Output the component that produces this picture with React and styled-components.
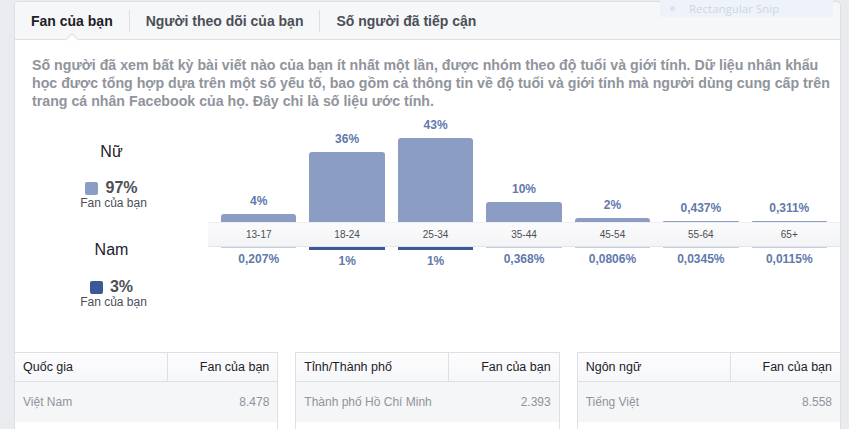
import React from "react";
import styled, { createGlobalStyle } from "styled-components";

const Global = createGlobalStyle`
  html, body { margin: 0; padding: 0; }
  body {
    background: #e9ebee;
    font-family: "Liberation Sans", Arial, sans-serif;
    width: 849px;
    height: 429px;
    overflow: hidden;
  }
`;

const Page = styled.div`
  position: relative;
  padding: 1px 8px 0 14px;
`;

const Panel = styled.div`
  background: #fff;
  border: 1px solid #dddfe2;
  border-bottom: none;
  border-radius: 5px 5px 0 0;
  height: 440px;
`;

const TabBar = styled.div`
  display: flex;
  align-items: center;
  height: 37px;
  background: #f6f7f9;
  border-bottom: 1px solid #dddfe2;
  border-radius: 5px 5px 0 0;
`;

const Tab = styled.div`
  position: relative;
  height: 100%;
  display: flex;
  align-items: center;
  padding: 0 16px;
  font-size: 14px;
  font-weight: bold;
  color: ${(p) => (p.$active ? "#1d2129" : "#4b4f56")};
  &::after {
    content: "";
    display: ${(p) => (p.$active ? "block" : "none")};
    position: absolute;
    left: 50%;
    bottom: -6px;
    width: 9px;
    height: 9px;
    margin-left: -5px;
    background: #fff;
    border-top: 1px solid #dddfe2;
    border-left: 1px solid #dddfe2;
    transform: rotate(45deg);
  }
`;

const TabSep = styled.div`
  width: 1px;
  height: 22px;
  background: #dddfe2;
`;

const Snip = styled.div`
  position: absolute;
  top: 0;
  left: 660px;
  width: 173px;
  height: 17px;
  background: #eef3fb;
  display: flex;
  align-items: center;
  gap: 14px;
  padding-left: 10px;
  box-sizing: border-box;
  font-family: "Open Sans", sans-serif;
  font-size: 11.5px;
  color: #cfd5df;
`;

const SnipDot = styled.span`
  width: 5px;
  height: 5px;
  border-radius: 50%;
  background: #dde3ee;
`;

const Description = styled.p`
  margin: 0;
  padding: 16px 6px 0 17px;
  font-size: 14.2px;
  font-weight: bold;
  line-height: 18px;
  color: #90949c;
`;

const ChartSection = styled.div`
  display: flex;
  margin-bottom: 44px;
`;

const GenderCol = styled.div`
  width: 193px;
  flex: none;
  display: flex;
  flex-direction: column;
  align-items: center;
  padding-top: 32px;
`;

const GenderTitle = styled.div`
  font-size: 16px;
  line-height: 20px;
  color: #1d2129;
  margin-top: ${(p) => p.$mt || 0}px;
`;

const StatRow = styled.div`
  display: flex;
  align-items: center;
  gap: 7px;
  margin-top: ${(p) => p.$mt}px;
  font-size: 16px;
  font-weight: bold;
  line-height: 18px;
  color: #4b4f56;
`;

const Swatch = styled.span`
  width: 13px;
  height: 13px;
  border-radius: 2px;
  background: ${(p) => p.$color};
`;

const Caption = styled.div`
  font-size: 12px;
  line-height: 12px;
  color: #4b4f56;
  padding-left: 4px;
`;

const Chart = styled.div`
  flex: 1;
  display: flex;
  flex-direction: column;
`;

const Row = styled.div`
  display: grid;
  grid-template-columns: repeat(7, 1fr);
  padding-right: 13px;
`;

const TopRow = styled(Row)`
  height: 112px;
  align-items: end;
`;

const Band = styled(Row)`
  height: 23px;
  align-items: center;
  background: linear-gradient(#fbfbfc, #f3f4f6);
  border-top: 1px solid #eceef1;
  border-bottom: 1px solid #e3e5e8;
`;

const Cell = styled.div`
  padding-left: 13px;
  display: flex;
  flex-direction: column;
  align-items: stretch;
  text-align: center;
`;

const PctLabel = styled.div`
  font-size: 12px;
  font-weight: bold;
  line-height: 14px;
  color: #6179ab;
`;

const FemaleBar = styled.div`
  margin-top: 6px;
  background: #8b9dc3;
  border-radius: 3px 3px 0 0;
`;

const MaleBar = styled.div`
  margin-bottom: 4px;
  background: ${(p) => (p.$strong ? "#3b5998" : "#c3cce0")};
`;

const AgeLabel = styled.div`
  font-size: 10px;
  color: #4b4f56;
`;

const Tables = styled.div`
  display: grid;
  grid-template-columns: repeat(3, 1fr);
  gap: 17px;
  margin: 0 -1px;
`;

const Table = styled.div`
  border-left: 1px solid #dddfe2;
  border-right: 1px solid #dddfe2;
  border-top: 1px solid #dddfe2;
  height: 80px;
`;

const HeadRow = styled.div`
  display: flex;
  height: 28px;
  background: linear-gradient(#fcfcfd, #f6f7f9);
  border-bottom: 1px solid #dddfe2;
`;

const HeadCell = styled.div`
  display: flex;
  align-items: center;
  padding: 0 8px;
  font-size: 12.5px;
  color: #1d2129;
  ${(p) =>
    p.$left
      ? "width: 153px; flex: none; box-sizing: border-box; border-right: 1px solid #dddfe2;"
      : "flex: 1; justify-content: flex-end;"}
`;

const DataRow = styled.div`
  display: flex;
  justify-content: space-between;
  align-items: center;
  height: 40px;
  padding: 0 8px;
  background: #f5f6f7;
  font-size: 12px;
  color: #90949c;
`;

const ages = ["13-17", "18-24", "25-34", "35-44", "45-54", "55-64", "65+"];
const female = [
  [4, "4%"],
  [36, "36%"],
  [43, "43%"],
  [10, "10%"],
  [2, "2%"],
  [0.437, "0,437%"],
  [0.311, "0,311%"],
];
const male = [
  [0.207, "0,207%"],
  [1, "1%"],
  [1, "1%"],
  [0.368, "0,368%"],
  [0.0806, "0,0806%"],
  [0.0345, "0,0345%"],
  [0.0115, "0,0115%"],
];

const tables = [
  ["Quốc gia", "Việt Nam", "8.478"],
  ["Tỉnh/Thành phố", "Thành phố Hồ Chí Minh", "2.393"],
  ["Ngôn ngữ", "Tiếng Việt", "8.558"],
];

export default function App() {
  return (
    <>
      <Global />
      <Page>
        <Panel>
          <TabBar>
            <Tab $active>Fan của bạn</Tab>
            <TabSep />
            <Tab>Người theo dõi của bạn</Tab>
            <TabSep />
            <Tab>Số người đã tiếp cận</Tab>
          </TabBar>
          <Description>
            Số người đã xem bất kỳ bài viết nào của bạn ít nhất một lần, được nhóm theo độ tuổi và giới tính. Dữ liệu nhân khẩu học được tổng hợp dựa trên một số yếu tố, bao gồm cả thông tin về độ tuổi và giới tính mà người dùng cung cấp trên trang cá nhân Facebook của họ. Đây chỉ là số liệu ước tính.
          </Description>
          <ChartSection>
            <GenderCol>
              <GenderTitle>Nữ</GenderTitle>
              <StatRow $mt={17}>
                <Swatch $color="#8b9dc3" />
                97%
              </StatRow>
              <Caption>Fan của bạn</Caption>
              <GenderTitle $mt={31}>Nam</GenderTitle>
              <StatRow $mt={18}>
                <Swatch $color="#3b5998" />
                3%
              </StatRow>
              <Caption>Fan của bạn</Caption>
            </GenderCol>
            <Chart>
              <TopRow>
                {female.map(([v, l], i) => (
                  <Cell key={i}>
                    <PctLabel>{l}</PctLabel>
                    <FemaleBar style={{ height: Math.max(1, Math.round(v * 1.953)) }} />
                  </Cell>
                ))}
              </TopRow>
              <Band>
                {ages.map((a) => (
                  <Cell key={a}>
                    <AgeLabel>{a}</AgeLabel>
                  </Cell>
                ))}
              </Band>
              <Row>
                {male.map(([v, l], i) => (
                  <Cell key={i}>
                    <MaleBar $strong={v >= 1} style={{ height: Math.max(1, Math.round(v * 3)) }} />
                    <PctLabel>{l}</PctLabel>
                  </Cell>
                ))}
              </Row>
            </Chart>
          </ChartSection>
          <Tables>
            {tables.map(([h, name, val]) => (
              <Table key={h}>
                <HeadRow>
                  <HeadCell $left>{h}</HeadCell>
                  <HeadCell>Fan của bạn</HeadCell>
                </HeadRow>
                <DataRow>
                  <span>{name}</span>
                  <span>{val}</span>
                </DataRow>
              </Table>
            ))}
          </Tables>
        </Panel>
        <Snip>
          <SnipDot />
          Rectangular Snip
        </Snip>
      </Page>
    </>
  );
}
